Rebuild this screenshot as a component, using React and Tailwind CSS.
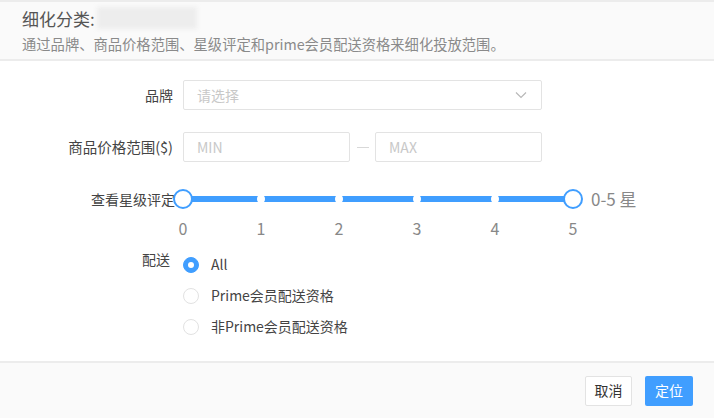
import React, { useState } from 'react';

const FONT = { fontFamily: '"Noto Sans CJK SC", "Noto Sans", sans-serif' };
const TICKS = [0, 1, 2, 3, 4, 5];

const Radio = ({ checked, label, onClick }) => (
  <button onClick={onClick} className="flex items-center h-[31px] gap-[12px] text-left">
    {checked ? (
      <span className="w-[16px] h-[16px] rounded-full bg-[#409eff] border border-[#409eff] flex items-center justify-center">
        <span className="w-[6px] h-[6px] rounded-full bg-white" />
      </span>
    ) : (
      <span className="w-[16px] h-[16px] rounded-full bg-white border border-[#e2e2e2]" />
    )}
    <span className="text-[14px] text-[#444]">{label}</span>
  </button>
);

export default function App() {
  const [shipping, setShipping] = useState('all');

  return (
    <div style={FONT} className="w-[714px] h-[418px] bg-white flex flex-col overflow-hidden">
      {/* Header */}
      <div className="h-[61px] bg-[#fafafa] border-t-2 border-b-2 border-[#ececec] px-[22px] pt-[4px] shrink-0">
        <div className="flex items-center h-[24px]">
          <span className="text-[17px] text-[#555] leading-none">细化分类:</span>
          <span className="ml-[2px] w-[100px] h-[22px] bg-[#ededed] blur-[2px]" />
        </div>
        <div className="mt-[5px] text-[14.3px] text-[#8a8a8a] leading-[18px]">
          通过品牌、商品价格范围、星级评定和prime会员配送资格来细化投放范围。
        </div>
      </div>

      {/* Body */}
      <div className="flex-1 pt-[19px]">
        {/* Brand */}
        <div className="flex items-center h-[30px]">
          <label className="w-[173px] text-right text-[14px] text-[#444]">品牌</label>
          <div className="ml-[10px] w-[359px] h-[30px] border border-[#e3e3e3] rounded-[2px] flex items-center justify-between px-[13px]">
            <span className="text-[14px] text-[#c8c8c8]">请选择</span>
            <svg width="14" height="14" viewBox="0 0 14 14" fill="none" stroke="#b8b8b8" strokeWidth="1.2">
              <path d="M2 4.5 L7 9.5 L12 4.5" />
            </svg>
          </div>
        </div>

        {/* Price */}
        <div className="flex items-center h-[30px] mt-[22px]">
          <label className="w-[173px] text-right text-[14.5px] text-[#444]">商品价格范围($)</label>
          <div className="ml-[10px] w-[167px] h-[30px] border border-[#e3e3e3] rounded-[2px] flex items-center px-[13px]">
            <span className="text-[14px] text-[#c8c8c8]">MIN</span>
          </div>
          <span className="w-[25px] flex justify-center">
            <span className="w-[12px] h-px bg-[#d8d8d8]" />
          </span>
          <div className="w-[167px] h-[30px] border border-[#e3e3e3] rounded-[2px] flex items-center px-[13px]">
            <span className="text-[14px] text-[#c8c8c8]">MAX</span>
          </div>
        </div>

        {/* Rating */}
        <div className="flex mt-[22px]">
          <label className="w-[175px] text-right text-[14px] text-[#444] h-[30px] leading-[30px] -mr-[2px]">查看星级评定</label>
          <div className="w-[410px] shrink-0">
            <div className="relative h-[30px] mx-[10px]">
              <div className="absolute left-0 right-0 top-[12px] h-[6px] bg-[#409eff]" />
              {TICKS.slice(1, 5).map((t) => (
                <span
                  key={t}
                  className="absolute top-[11px] w-[8px] h-[8px] -ml-[4px] rounded-full bg-white"
                  style={{ left: `${t * 20}%` }}
                />
              ))}
              <span className="absolute left-[-10px] top-[5px] w-[20px] h-[20px] rounded-full bg-white border-2 border-[#409eff]" />
              <span className="absolute right-[-10px] top-[5px] w-[20px] h-[20px] rounded-full bg-white border-2 border-[#409eff]" />
            </div>
            <div className="relative h-[30px] mx-[10px]">
              {TICKS.map((t) => (
                <span
                  key={t}
                  className="absolute top-[2px] w-[20px] -ml-[10px] text-center text-[16px] text-[#888]"
                  style={{ left: `${t * 20}%` }}
                >
                  {t}
                </span>
              ))}
            </div>
          </div>
          <span className="ml-[8px] h-[30px] leading-[30px] text-[17px] text-[#888]">0-5 星</span>
        </div>

        {/* Shipping */}
        <div className="flex mt-[5px]">
          <label className="w-[170px] text-right text-[14px] text-[#444]">配送</label>
          <div className="ml-[13px] flex flex-col">
            <Radio checked={shipping === 'all'} label="All" onClick={() => setShipping('all')} />
            <Radio checked={shipping === 'prime'} label="Prime会员配送资格" onClick={() => setShipping('prime')} />
            <Radio checked={shipping === 'nonprime'} label="非Prime会员配送资格" onClick={() => setShipping('nonprime')} />
          </div>
        </div>
      </div>

      {/* Footer */}
      <div className="h-[57px] shrink-0 bg-[#fafafa] border-t-2 border-[#ececec] flex items-center justify-end gap-[13px] pr-[21px]">
        <button className="w-[47px] h-[30px] bg-white border border-[#e3e3e3] rounded-[2px] text-[14px] text-[#333]">取消</button>
        <button className="w-[48px] h-[30px] bg-[#409eff] rounded-[2px] text-[14px] text-white">定位</button>
      </div>
    </div>
  );
}
